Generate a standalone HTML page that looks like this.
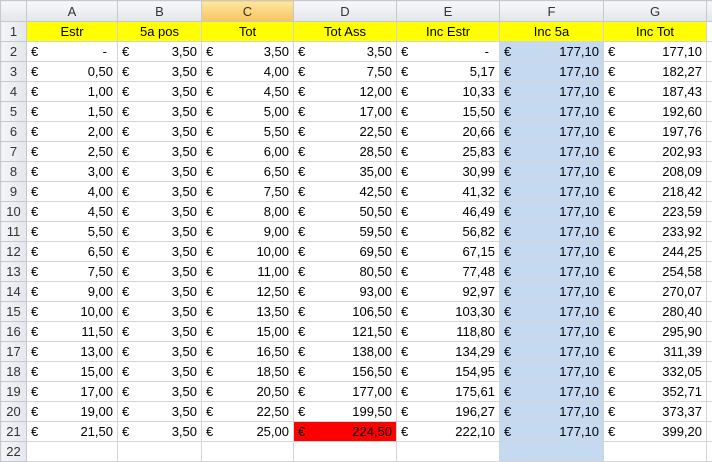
<!DOCTYPE html>
<html><head><style>
body{margin:0;width:712px;height:450px;overflow:hidden;background:#fff;font-family:"Liberation Sans",sans-serif;font-size:13px;position:relative;}
table{border-collapse:collapse;table-layout:fixed;position:absolute;left:0;top:0;width:740px;}
td{border:1px solid #d4d4d4;height:19px;padding:0 4px;white-space:nowrap;overflow:hidden;color:#000;}
tr.h td{height:20px;background:linear-gradient(#f7f8fa,#e3e6ea);border-color:#c5c9cf;text-align:center;color:#333;}
tr.h td.sel{background:linear-gradient(#fde79f,#f8c45f);}
td.rh{background:linear-gradient(90deg,#f4f5f7,#e4e7eb);border-color:#c5c9cf;text-align:center;color:#333;padding:0;}
tr.y td.c{background:#ffff00;text-align:center;}
.e{display:flex;justify-content:space-between;}
td.f{background:#c5d9f1;}
td.r{background:#ff0000;}
</style></head><body>
<table>
<colgroup><col style="width:26px"><col style="width:91px"><col style="width:84px"><col style="width:92px"><col style="width:103px"><col style="width:103px"><col style="width:104px"><col style="width:103px"><col style="width:34px"></colgroup>
<tr class="h"><td></td><td>A</td><td>B</td><td class="sel">C</td><td>D</td><td>E</td><td>F</td><td>G</td><td></td></tr>
<tr class="y"><td class="rh">1</td><td class="c">Estr</td><td class="c">5a pos</td><td class="c">Tot</td><td class="c">Tot Ass</td><td class="c">Inc Estr</td><td class="c">Inc 5a</td><td class="c">Inc Tot</td><td></td></tr>
<tbody id="b"></tbody>
</table>
<script>
var d=[["-","3,50","3,50","3,50","-","177,10","177,10"],
["0,50","3,50","4,00","7,50","5,17","177,10","182,27"],
["1,00","3,50","4,50","12,00","10,33","177,10","187,43"],
["1,50","3,50","5,00","17,00","15,50","177,10","192,60"],
["2,00","3,50","5,50","22,50","20,66","177,10","197,76"],
["2,50","3,50","6,00","28,50","25,83","177,10","202,93"],
["3,00","3,50","6,50","35,00","30,99","177,10","208,09"],
["4,00","3,50","7,50","42,50","41,32","177,10","218,42"],
["4,50","3,50","8,00","50,50","46,49","177,10","223,59"],
["5,50","3,50","9,00","59,50","56,82","177,10","233,92"],
["6,50","3,50","10,00","69,50","67,15","177,10","244,25"],
["7,50","3,50","11,00","80,50","77,48","177,10","254,58"],
["9,00","3,50","12,50","93,00","92,97","177,10","270,07"],
["10,00","3,50","13,50","106,50","103,30","177,10","280,40"],
["11,50","3,50","15,00","121,50","118,80","177,10","295,90"],
["13,00","3,50","16,50","138,00","134,29","177,10","311,39"],
["15,00","3,50","18,50","156,50","154,95","177,10","332,05"],
["17,00","3,50","20,50","177,00","175,61","177,10","352,71"],
["19,00","3,50","22,50","199,50","196,27","177,10","373,37"],
["21,50","3,50","25,00","224,50","222,10","177,10","399,20"]];
var h="";
d.forEach(function(r,i){h+='<tr><td class="rh">'+(i+2)+'</td>';
r.forEach(function(v,j){var c=j==5?' class="f"':(j==3&&i==19?' class="r"':'');
var pad=v=="-"?'<span style="padding-right:6px">-</span>':'<span>'+v+'</span>';
h+='<td'+c+'><div class="e"><span>€</span>'+pad+'</div></td>';});
h+='<td></td></tr>';});
h+='<tr><td class="rh">22</td><td></td><td></td><td></td><td></td><td></td><td class="f"></td><td></td><td></td></tr>';
document.getElementById('b').innerHTML=h;
</script>
</body></html>
